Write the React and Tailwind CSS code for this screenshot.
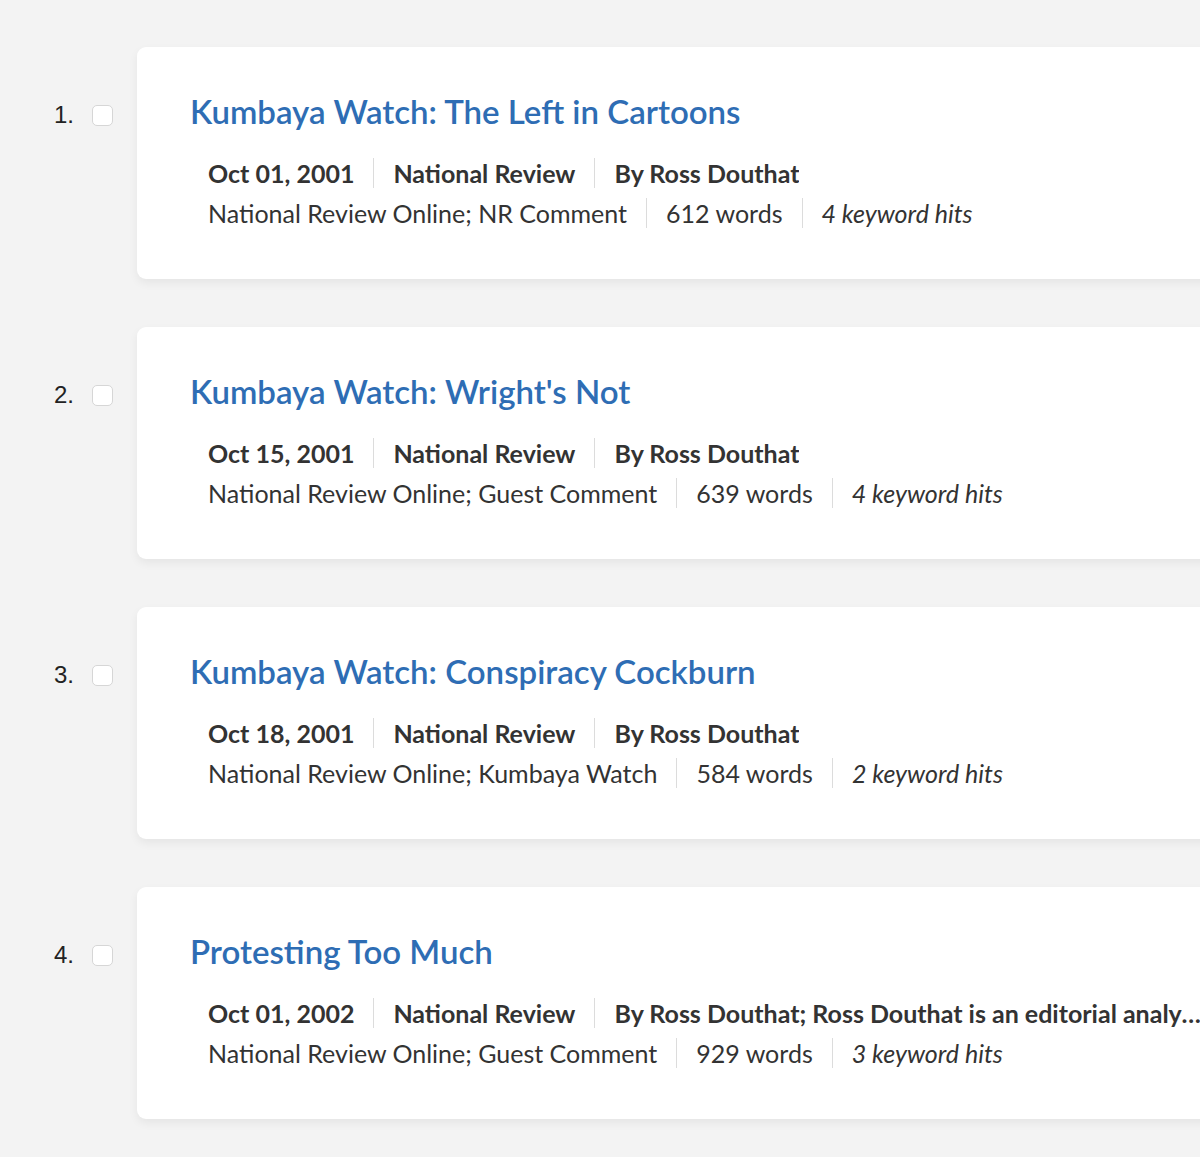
import React from "react";

const results = [
  {
    title: "Kumbaya Watch: The Left in Cartoons",
    date: "Oct 01, 2001",
    source: "National Review",
    byline: "By Ross Douthat",
    section: "National Review Online; NR Comment",
    words: "612 words",
    hits: "4 keyword hits",
  },
  {
    title: "Kumbaya Watch: Wright's Not",
    date: "Oct 15, 2001",
    source: "National Review",
    byline: "By Ross Douthat",
    section: "National Review Online; Guest Comment",
    words: "639 words",
    hits: "4 keyword hits",
  },
  {
    title: "Kumbaya Watch: Conspiracy Cockburn",
    date: "Oct 18, 2001",
    source: "National Review",
    byline: "By Ross Douthat",
    section: "National Review Online; Kumbaya Watch",
    words: "584 words",
    hits: "2 keyword hits",
  },
  {
    title: "Protesting Too Much",
    date: "Oct 01, 2002",
    source: "National Review",
    byline: "By Ross Douthat; Ross Douthat is an editorial analyst for National Review Online",
    section: "National Review Online; Guest Comment",
    words: "929 words",
    hits: "3 keyword hits",
  },
];

const Divider = () => <span className="mx-[19px] h-[30px] w-px shrink-0 bg-[#dcdcdc]" />;

const ResultCard = ({ item, index }) => (
  <li className="flex items-start">
    <div className="flex w-[137px] shrink-0 items-center pt-[54px]">
      <span
        className="w-[75px] pr-[1px] text-right text-[24px] leading-[28px] text-[#222]"
        style={{ fontFamily: '"Liberation Sans", Arial, sans-serif' }}
      >
        {index + 1}.
      </span>
      <input
        type="checkbox"
        className="ml-[17px] h-[21px] w-[21px] appearance-none rounded-[5px] border border-[#d6d6d6] bg-white"
      />
    </div>
    <div className="w-[1100px] shrink-0 rounded-l-[9px] bg-white pb-[46px] pl-[53px] pt-[44px] shadow-[0_4px_10px_rgba(0,0,0,0.06)]">
      <a href="#" className="block text-[33px] font-semibold leading-[40px] text-[#2e6db4]">
        {item.title}
      </a>
      <div className="mt-[22px] pl-[18px] text-[25px] leading-[40px] text-[#333]">
        <div className="flex items-center font-bold">
          <span className="shrink-0">{item.date}</span>
          <Divider />
          <span className="shrink-0">{item.source}</span>
          <Divider />
          <span className="max-w-[594px] truncate">{item.byline}</span>
        </div>
        <div className="flex items-center">
          <span>{item.section}</span>
          <Divider />
          <span>{item.words}</span>
          <Divider />
          <span className="italic">{item.hits}</span>
        </div>
      </div>
    </div>
  </li>
);

export default function App() {
  return (
    <div
      className="min-h-[1157px] overflow-hidden bg-[#f3f3f3] pt-[47px]"
      style={{ fontFamily: "Lato, 'Open Sans', sans-serif" }}
    >
      <ol className="flex flex-col gap-[48px]">
        {results.map((item, i) => (
          <ResultCard key={item.title} item={item} index={i} />
        ))}
      </ol>
    </div>
  );
}
